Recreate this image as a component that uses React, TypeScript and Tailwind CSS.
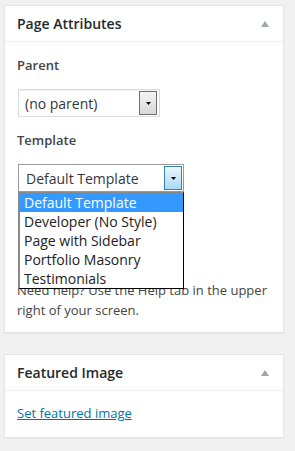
import React from "react";

function Caret() {
  return (
    <svg width="8" height="6" viewBox="0 0 8 6" className="block">
      <polygon points="0,6 8,6 4,0" fill="#a0a5aa" />
    </svg>
  );
}

function DownArrow() {
  return (
    <svg width="5" height="3" viewBox="0 0 5 3" className="block">
      <polygon points="0,0 5,0 2.5,3" fill="#000" />
    </svg>
  );
}

const items = [
  "Default Template",
  "Developer (No Style)",
  "Page with Sidebar",
  "Portfolio Masonry",
  "Testimonials",
];

export default function App() {
  return (
    <div className="w-[295px] h-[451px] overflow-hidden bg-[#f1f1f1] pt-[5px] pl-[4px] font-['Open_Sans',sans-serif]">
      {/* Page Attributes */}
      <div className="w-[280px] bg-white border border-[#e5e5e5] shadow-[0_1px_1px_rgba(0,0,0,0.04)]">
        <div className="h-[36px] border-b border-[#eeeeee] flex items-center justify-between pl-[12px] pr-[14px]">
          <h2 className="text-[14px] leading-[19.6px] font-semibold text-[#23282d]">Page Attributes</h2>
          <Caret />
        </div>
        <div className="px-[12px] pb-[12px] text-[13px] text-[#444]">
          <p className="mt-[13px] leading-[20px] font-semibold">Parent</p>
          <div className="relative mt-[14px] ml-[1px] w-[142px] h-[28px] border border-[#dddddd] shadow-[inset_0_1px_2px_rgba(0,0,0,0.07)] flex items-center pl-[6px] text-[14px] text-[#32373c]">
            <span>(no parent)</span>
            <div className="absolute right-[2px] top-[1px] bottom-[1px] w-[18px] border border-[#707070] bg-gradient-to-b from-[#f4f4f4] to-[#d8d8d8] flex items-center justify-center">
              <DownArrow />
            </div>
          </div>
          <p className="mt-[13px] leading-[20px] font-semibold">Template</p>
          <div className="relative z-10 mt-[14px] ml-[1px] w-[166px] h-[28px]">
            <div className="relative w-full h-full border border-[#9a9a9a] bg-white flex items-center pl-[7px] text-[14px] text-[#32373c]">
              <span>Default Template</span>
              <div className="absolute right-[1px] top-[1px] bottom-[1px] w-[18px] border border-[#3c7fb1] bg-gradient-to-b from-[#eaf6fd] to-[#a9daf5] flex items-center justify-center">
                <DownArrow />
              </div>
            </div>
            <ul className="absolute left-0 top-full w-[166px] bg-white border-t border-t-[#8a8a8a] border-l-2 border-l-[#8a8a8a] border-r border-r-black border-b border-b-black">
              {items.map((it, i) => (
                <li
                  key={it}
                  className={
                    i === 0
                      ? "h-[19px] leading-[19px] pl-[4px] text-[14px] bg-[#3399ff] text-white whitespace-nowrap"
                      : "h-[19px] leading-[19px] pl-[4px] text-[14px] text-[#222] whitespace-nowrap"
                  }
                >
                  {it}
                </li>
              ))}
            </ul>
          </div>
          {/* space occupied by the (covered) order field */}
          <div className="mt-[13px] h-[20px]" />
          <div className="mt-[14px] ml-[1px] w-[50px] h-[28px]" />
          <p className="mt-[14px] leading-[19.5px]">
            Need help? Use the Help tab in the upper right of your screen.
          </p>
        </div>
      </div>

      {/* Featured Image */}
      <div className="mt-[21px] w-[280px] bg-white border border-[#e5e5e5] shadow-[0_1px_1px_rgba(0,0,0,0.04)]">
        <div className="h-[36px] border-b border-[#eeeeee] flex items-center justify-between pl-[12px] pr-[14px]">
          <h2 className="text-[14px] leading-[19.6px] font-semibold text-[#23282d]">Featured Image</h2>
          <Caret />
        </div>
        <div className="px-[12px] pb-[13px] text-[13px]">
          <p className="mt-[13px] leading-[19.5px]">
            <a href="#" className="text-[#0073aa] underline">Set featured image</a>
          </p>
        </div>
      </div>
    </div>
  );
}
